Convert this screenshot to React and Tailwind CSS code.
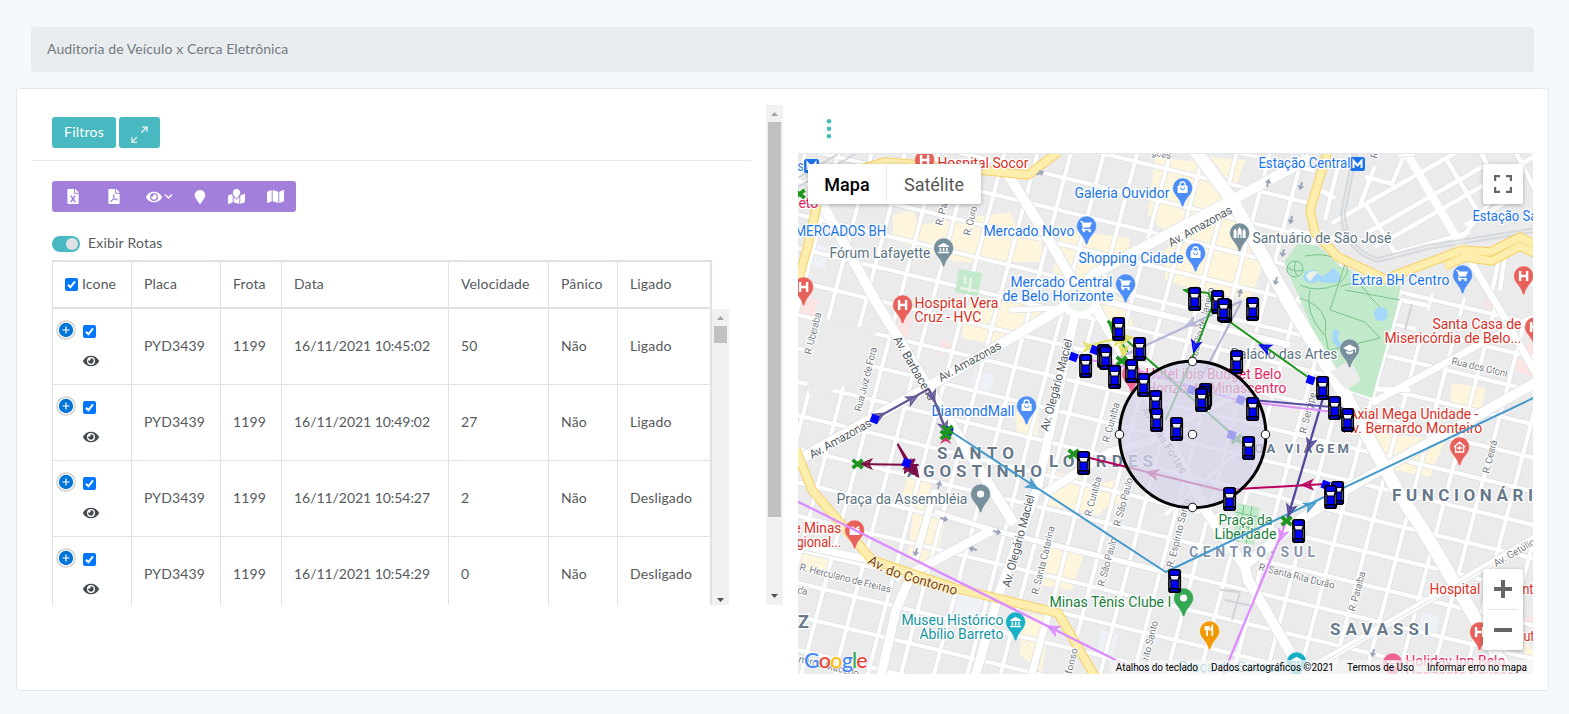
import React from "react";
import { FaEye, FaMap, FaMapMarked, FaMapMarker, FaFileExcel, FaFilePdf, FaChevronDown } from "react-icons/fa";

/* ---------- left panel ---------- */

const COLS = "grid grid-cols-[79px_89px_61px_167px_100px_69px_95px]";
const ROWS = [
  ["PYD3439", "1199", "16/11/2021 10:45:02", "50", "Não", "Ligado"],
  ["PYD3439", "1199", "16/11/2021 10:49:02", "27", "Não", "Ligado"],
  ["PYD3439", "1199", "16/11/2021 10:54:27", "2", "Não", "Desligado"],
  ["PYD3439", "1199", "16/11/2021 10:54:29", "0", "Não", "Desligado"],
];
const HEADS = ["Placa", "Frota", "Data", "Velocidade", "Pânico", "Ligado"];

function Check() {
  return (
    <svg width="13" height="13" viewBox="0 0 13 13" className="shrink-0">
      <rect width="13" height="13" rx="2" fill="#0075ff" />
      <path d="M3 6.8 5.4 9.2 10 3.4" fill="none" stroke="#fff" strokeWidth="2" />
    </svg>
  );
}

function Plus() {
  return (
    <svg width="20" height="20" viewBox="0 0 20 20" className="shrink-0">
      <circle cx="10" cy="10" r="9.2" fill="#fff" stroke="#c9c9c9" strokeWidth="1.2" />
      <circle cx="10" cy="10" r="7.2" fill="#0275d8" />
      <path d="M6.5 10h7M10 6.5v7" stroke="#fff" strokeWidth="1.2" />
    </svg>
  );
}

function Scrollbar({ thumb, tail }) {
  return (
    <div className="flex w-[17px] shrink-0 flex-col items-center bg-[#f1f1f1]">
      <div className="flex h-[17px] w-full shrink-0 items-center justify-center">
        <svg width="7" height="4" viewBox="0 0 7 4"><path d="M0 4 3.5 0 7 4z" fill="#a3a3a3" /></svg>
      </div>
      <div className={`w-[13px] shrink-0 bg-[#c1c1c1] ${thumb}`} />
      <div className={`mt-auto ${tail}`}>
        <svg className="block" width="7" height="4" viewBox="0 0 7 4"><path d="M0 0 3.5 4 7 0z" fill="#505050" /></svg>
      </div>
    </div>
  );
}

function LeftPanel() {
  return (
    <div className="flex h-[500px] w-[751px]">
      <div className="flex w-[734px] shrink-0 flex-col overflow-hidden">
        <div className="flex h-[56px] w-[719px] shrink-0 gap-[3px] border-b border-[#e3ebf3] pt-3 pl-5 text-white">
          <button className="h-[31px] w-16 rounded-[3px] bg-[#48b9c1] pb-[2px] text-[14px] tracking-[0.2px]">Filtros</button>
          <button className="flex h-[31px] w-[41px] items-center justify-center rounded-[3px] bg-[#48b9c1]">
            <svg width="17" height="17" viewBox="0 0 17 17" fill="none" stroke="#fff" strokeWidth="1.1" className="mt-[3px]">
              <path d="M11 1H16v5M16 1l-5.500 5.500M6 16.200H1v-5M1 16.200l5-5" />
            </svg>
          </button>
        </div>
        <div className="mt-5 ml-5 flex h-[31px] w-[244px] shrink-0 items-center rounded-[3px] bg-[#a27fdb] pl-[15px] text-white">
          <FaFileExcel className="w-3 text-[15px]" />
          <FaFilePdf className="ml-[29px] w-3 text-[15px]" />
          <FaEye className="ml-[26px] text-[16px]" />
          <FaChevronDown className="ml-[2px] text-[9px]" />
          <FaMapMarker className="ml-5 text-[14px]" />
          <FaMapMarked className="ml-[21px] text-[17px]" />
          <FaMap className="ml-[22px] text-[17px]" />
        </div>
        <div className="mt-[22px] ml-5 flex h-[20px] shrink-0 items-center gap-2">
          <div className="flex h-4 w-7 items-center justify-end rounded-full bg-[#48b9c1] pr-0.5">
            <div className="h-3 w-3 rounded-full bg-[#dee2e6]" />
          </div>
          <span className="pb-[3px] text-[14px] tracking-[0.2px]">Exibir Rotas</span>
        </div>
        <div className={`${COLS} mt-[6px] ml-5 h-[49px] w-[660px] shrink-0 border-y-2 border-[#dee2e6] text-[14px] tracking-[0.15px]`}>
          <div className="flex items-center gap-1 border-l border-[#dee2e6] pl-3"><Check /><span className="pb-[2px]">Icone</span></div>
          {HEADS.map((h, i) => (
            <div key={h} className={`flex items-center border-l border-[#dee2e6] pb-[2px] pl-3 ${i === 5 ? "border-r-2" : ""}`}>{h}</div>
          ))}
        </div>
        <div className="ml-5 flex h-[296px] shrink-0">
          <div className="h-full w-[660px] overflow-hidden">
            {ROWS.map((r, n) => (
              <div key={n} className={`${COLS} h-[76px] text-[14px]`}>
                <div className="flex gap-[7px] border-b border-l border-[#dee2e6] pt-[11px] pl-[3px]">
                  <Plus />
                  <div className="flex flex-col gap-[15px] pt-[5px]">
                    <Check />
                    <FaEye className="text-[16px] text-[#434a50]" />
                  </div>
                </div>
                {r.map((c, i) => (
                  <div key={i} className={`flex items-center border-b border-l border-[#dee2e6] pb-[2px] pl-3 ${i === 5 ? "border-r-2" : ""} ${i === 2 ? "tracking-[-0.05px]" : "tracking-[0.15px]"}`}>{c}</div>
                ))}
              </div>
            ))}
          </div>
          <Scrollbar thumb="h-[17px]" tail="pb-[3px]" />
        </div>
      </div>
      <Scrollbar thumb="h-[395px]" tail="pb-[7px]" />
    </div>
  );
}

/* ---------- map ---------- */

const BLUE = "#1a73e8", RED = "#d93025", SLATE = "#5b7382", GREEN = "#188038", PINK = "#e91e63", TEAL = "#1295a4", AREA = "#66788a";

// [text, x, baseline, width, colour]
const LABELS = [
  ["s", 797, 171, 6, BLUE], ["Hospital Socor", 937, 168, 91, RED], ["Galeria Ouvidor", 1074, 198, 95, BLUE],
  ["Estação Central", 1258, 168, 92, BLUE], ["Estação Sa", 1472, 221, 65, BLUE], ["MERCADOS BH", 794, 236, 92, BLUE],
  ["eto", 798, 208, 20, PINK], ["Fórum Lafayette", 829, 258, 101, SLATE], ["Mercado Novo", 983, 236, 91, BLUE],
  ["Santuário de São José", 1252, 243, 139, SLATE], ["Shopping Cidade", 1078, 263, 105, BLUE],
  ["Mercado Central", 1010, 287, 102, BLUE], ["de Belo Horizonte", 1002, 301, 111, BLUE],
  ["Extra BH Centro", 1351, 285, 98, BLUE], ["Santa Casa de", 1432, 329, 89, RED],
  ["Misericórdia de Belo...", 1384, 343, 137, RED], ["Hospital Vera", 914, 308, 84, RED], ["Cruz - HVC", 914, 322, 67, RED],
  ["Palácio das Artes", 1230, 359, 107, SLATE], ["Hotel ibis Budget Belo", 1145, 379, 136, PINK],
  ["Horizonte Minascentro", 1146, 393, 140, PINK], ["DiamondMall", 931, 416, 83, BLUE],
  ["Axial Mega Unidade -", 1348, 419, 130, RED], ["Av. Bernardo Monteiro", 1343, 433, 139, RED],
  ["Praça da Assembléia", 836, 504, 131, SLATE], ["e Minas", 793, 533, 48, RED], ["gional...", 796, 547, 45, RED],
  ["Museu Histórico", 901, 625, 102, TEAL], ["Abílio Barreto", 919, 639, 84, TEAL], ["Minas Tênis Clube I", 1049, 607, 122, GREEN],
  ["Praça da", 1218, 525, 54, GREEN], ["Liberdade", 1214, 539, 62, GREEN], ["Hospital", 1429, 594, 51, RED],
  ["nt", 1522, 594, 11, RED], ["ut", 1523, 641, 11, RED], ["Holiday Inn Belo", 1405, 666, 100, PINK],
  ["Horizonte Savassi", 1405, 680, 112, PINK], ["Praça da Savassi", 1178, 672, 107, TEAL],
];
const AREAS = [
  ["SANTO", 937, 459, 77, 17], ["AGOSTINHO", 907, 477, 135, 17], ["LOURDES", 1049, 467, 104, 17], ["BOA VIAGEM", 1243, 453, 106, 13],
  ["FUNCIONÁRI", 1392, 501, 141, 17], ["CENTRO-SUL", 1189, 557, 126, 14], ["SAVASSI", 1330, 635, 99, 17], ["Z", 798, 628, 12, 18],
];
// [text, x, y, angle, length, size]
const STREETS = [
  ["Av. Amazonas", 1171, 247, -29, 71, 12], ["Av. Amazonas", 941, 382, -29, 70, 12], ["Av. Amazonas", 812, 459, -29, 69, 12],
  ["Av. Barbacena", 893, 339, 60, 72, 12], ["Av. Olegário Maciel", 1048, 432, -75, 95, 12], ["Av. Olegário Maciel", 1010, 588, -75, 95, 12],
  ["R. Uberaba", 811, 355, -76, 43, 10], ["Rua Juiz de Fora", 861, 412, -76, 66, 10], ["R. Curitiba", 1109, 443, -75, 41, 10],
  ["R. Curitiba", 1091, 517, -75, 41, 10], ["R. São Paulo", 1120, 527, -75, 50, 10], ["R. São Paulo", 1104, 587, -75, 50, 10],
  ["R. Santa Catarina", 1038, 595, -76, 70, 10], ["Av. Bias Fortes", 1141, 410, 58, 76, 11], ["Rua Rio de Janeiro", 1196, 362, -76, 76, 10],
  ["R. Pará", 942, 226, -76, 32, 10], ["R. Ouro", 970, 236, -76, 30, 10], ["R. Espírito Santo", 1173, 568, -76, 71, 10],
  ["Espírito Santo", 1144, 678, -76, 58, 10], ["R. Herculano de Freitas", 799, 570, 14, 94, 10], ["R. Santa Rita Durão", 1258, 570, 14, 78, 10],
  ["R. Paraíba", 1355, 612, -75, 41, 10], ["R. Ceará", 1489, 474, -76, 34, 10], ["R. Sergipe", 1306, 434, -76, 42, 10],
  ["Rua dos Otoni", 1451, 364, 13, 57, 10], ["Av. Getúlio Va", 1496, 567, -30, 60, 10], ["Afonso", 1070, 681, -76, 33, 10],
  ["mirco Macedo", 798, 662, 14, 62, 10], ["goas", 1151, 155, 12, 20, 10], ["R", 1377, 159, -76, 7, 10], ["da", 797, 593, 12, 10, 10],
];

const PIN_BLUE = "#4c8df6", PIN_RED = "#e8625b", PIN_SLATE = "#78909c";
// [x, y, colour, glyph]
const PINS = [
  [924, 160, PIN_RED, "H"], [803, 287, PIN_RED, "H"], [902, 305, PIN_RED, "H"], [1523, 276, PIN_RED, "H"], [1534, 327, PIN_RED, "H"],
  [1479, 632, PIN_RED, "H"], [1182, 188, PIN_BLUE, "bag"], [1195, 253, PIN_BLUE, "bag"], [1026, 406, PIN_BLUE, "bag"],
  [1086, 226, PIN_BLUE, "cart"], [1125, 284, PIN_BLUE, "cart"], [1462, 275, PIN_BLUE, "cart"], [943, 248, PIN_SLATE, "bank"],
  [1239, 233, PIN_SLATE, "castle"], [1349, 349, PIN_SLATE, "cap"], [980, 494, PIN_SLATE, "dot"], [854, 530, PIN_RED, "church"],
  [1015, 622, "#18b0c4", "bank"], [1183, 598, "#34a853", "dot"], [1209, 631, "#f29900", "fork"], [1296, 662, "#18b0c4", "bank"],
  [1392, 663, "#f06292", "bed"], [1459, 447, PIN_RED, "house"], [1131, 374, "#f06292", "bed"],
];

function Glyph({ k }) {
  const s = { fill: "none", stroke: "#fff", strokeWidth: 1.7 };
  if (k === "H") return <path {...s} strokeWidth="2.4" d="M-3.500-5V5M3.500-5V5M-3.500 0H3.500" />;
  if (k === "bag") return <g><rect x="-5" y="-2.500" width="10" height="7.500" rx="1" fill="#fff" /><path {...s} strokeWidth="1.3" d="M-2.500-2v-1.500a2.500 2.500 0 0 1 5 0V-2" /><path d="M-2.200-.5a2.200 2.200 0 0 0 4.400 0" fill="none" stroke={PIN_BLUE} /></g>;
  if (k === "cart") return <g fill="#fff"><path d="M-6.500-5h2.300l.8 1.500H5.500L3.200 1.500H-2.500L-3.300 3H4v1.200h-9l1.200-3L-5.200-4h-1.300z" /><circle cx="-2.700" cy="5" r="1.200" /><circle cx="3" cy="5" r="1.200" /></g>;
  if (k === "bank") return <g fill="#fff"><path d="M-5.500-2 0-5.200 5.500-2v1h-11zM-5.500 3.800h11V5.200h-11z" /><path d="M-4-.2h1.500v3.500H-4zM-.8-.2H.8v3.500H-.8zM2.500-.2H4v3.500H2.500z" /></g>;
  if (k === "castle") return <path fill="#fff" d="M-6 5v-7l1.500-2.500L-3-2v7zM-2 5v-8l2-3 2 3v8H.8V1.500H-.8V5zM3 5v-7l1.500-2.500L6-2v7z" />;
  if (k === "cap") return <path fill="#fff" d="M-6.500-1 0-4.500 6.500-1v4.500h-1V0L0 2.500zM-3.500 1.800 0 3.600 3.500 1.800V4L0 5.600-3.500 4z" />;
  if (k === "dot") return <circle r="3.600" fill="#fff" />;
  if (k === "church") return <path fill="#fff" d="M-5 5v-7h2l1-2 2 2V-1L4-4l1 1-2 2h2v6z" />;
  if (k === "fork") return <path {...s} d="M-2.500-5v10M-4.200-5v3.500h3.400V-5M2.700 5v-10q-1.500 2-1.200 5" />;
  if (k === "house") return <path {...s} strokeWidth="1.300" d="M-5.500 0 0-4.800 5.500 0M-4-1v6h8v-6M0-1.500V3.500M-2.500 1h5" />;
  return <path fill="#fff" d="M-5-3h1.500V1H5v3.500H4V3h-7.500v1.500H-5zM-2-2h5q1.500 0 1.500 2h-6.500z" />;
}

const Pin = ({ p: [x, y, c, k] }) => (
  <g transform={`translate(${x + 0.6} ${y})`}>
    <path d="M-9.900 0a9.900 9.900 0 0 1 19.800 0c0 7-7.200 9.500-9 18.500h-1.800C-2.700 9.500-9.900 7-9.900 0z" fill={c} stroke="#fff" strokeOpacity=".5" strokeWidth=".7" />
    <Glyph k={k} />
  </g>
);

const CARS = [
  [1194, 299], [1217, 302], [1225, 311], [1223, 310], [1252, 309], [1118, 329], [1103, 356], [1105, 358], [1139, 349], [1085, 366], [1114, 377],
  [1131, 371], [1143, 385], [1155, 402], [1156, 420], [1176, 429], [1236, 362], [1205, 395], [1204, 398], [1201, 400], [1252, 409],
  [1248, 448], [1083, 463], [1229, 499], [1322, 388], [1334, 408], [1347, 420], [1337, 493], [1330, 497], [1298, 531], [1174, 581],
];
const Car = ({ p: [x, y] }) => (
  <g transform={`translate(${x + 0.6} ${y})`}>
    <rect x="-6.500" y="-12" width="13" height="24" rx="2.800" fill="#000" />
    <rect x="-4.500" y="-10.500" width="9" height="4.800" rx="1" fill="#0000f0" />
    <path d="M-4-5h8l-1 3.500h-6z" fill="#eef" />
    <path d="M-3.300-.5h6.600v7.500h-6.600z" fill="#0000ff" />
    <path d="M-4 9.400h8" stroke="#0000d8" strokeWidth="1.800" />
    <path d="M-4.700-2v9M4.700-2v9" stroke="#7a7aa5" strokeWidth=".8" />
  </g>
);

// minor street grid
const CROSS = Array.from({ length: 22 }, (_, i) => -20 + i * 33.5);
const DOWN = Array.from({ length: 28 }, (_, i) => 806 + i * 33.2);

const AVENUES = [
  ["M798 460 928 387 1062 308 1095 273 1232 200 1310 158", 10], ["M808 178 875 300 928 387 1014 524", 10], ["M1078 300 1037 490 1000 590 974 680", 9],
  ["M1005 170 1045 233 1078 290 1095 307 1150 400 1205 510 1245 567 1248 580 1303 674", 10], ["M1195 150 1232 200 1290 305 1345 395 1398 492 1425 533 1478 623 1512 680", 13],
  ["M1535 383 1345 490 1300 520 1245 565", 10], ["M1372 403 1482 343 1533 318", 7], ["M1535 538 1325 660 1300 676", 7], ["M1045 493 1110 452 1190 430", 8],
  ["M992 530 912 573 896 610 880 680", 9], ["M935 490 915 560", 7], ["M1462 247 1500 310 1535 372", 7], ["M798 545 880 562 900 580", 7],
  ["M1062 308 1010 310", 5], ["M1410 390 1345 388 1372 398 1400 300", 5], ["M1100 300 1290 345", 6], ["M1163 430 1260 385", 6], ["M1415 154 1398 156", 3],
  ["M935 512 992 530 1165 572", 5], ["M1052 600 1030 680", 7], ["M1165 515 1240 450", 4],
];
const BLOCKS = [
  "M893 215 912 210 920 225 1010 212 1022 240 1045 230 1040 262 958 262 945 258 893 240z", "M1050 290 1062 230 1130 238 1128 252 1100 265 1090 275z",
  "M1155 157 1200 162 1225 200 1165 232 1148 215z", "M1210 157 1245 160 1235 190z", "M1178 238 1235 210 1265 260 1250 300 1195 290 1165 280 1165 250z",
  "M1095 290 1125 300 1135 330 1110 335z", "M1048 470 1085 480 1108 500 1100 515 1048 505z", "M965 310 975 300 1042 305 1040 322 1000 345 962 338z",
  "M1015 418 1020 400 1040 405 1037 440 1018 436z", "M908 475 932 480 928 500 902 495z", "M1452 383 1486 388 1480 413 1450 408z", "M1373 433 1445 440 1430 477 1395 470z",
  "M914 500 945 520 935 570 908 560z", "M1045 540 1085 550 1072 590 1040 585z", "M1022 612 1050 618 1042 672 1020 655z", "M1075 490 1115 480 1125 500 1090 515z",
  "M800 545 830 552 828 575 798 568z", "M1525 640 1533 650 1533 674 1522 674z",
];
const PINKS = ["M900 315 912 318 906 340 895 330z", "M941 340 957 345 953 356 938 352z", "M798 295 818 300 813 318 798 314z", "M1483 300 1492 300 1490 315z", "M1520 355 1533 335 1533 378 1514 370z", "M1525 620 1533 612 1533 632z"];
const YELLOW = [
  "M817 205 808 245 797 285", "M796 450 812 490 872 560 955 588 1058 613 1097 680", "M850 172 885 162 980 170 1028 175 1058 152",
  "M1328 150 1310 210 1315 233 1338 257 1385 279 1462 250 1490 252 1520 237 1536 245", "M1445 266 1465 257 1492 261 1520 246 1536 254",
];
const NORTHEAST = "M1315 150H1540V330L1485 300 1400 290 1385 279 1338 257 1312 225z";
const NE_ROADS = "M1332 223 1455 153M1375 247 1535 156M1365 234 1482 167M1445 157 1477 210M1365 203 1395 253 1470 232M1365 177 1392 184 1405 153M1375 166 1360 205M1340 158 1325 220M1320 190 1335 198M1340 240 1290 230M1480 150 1500 190 1480 215 1460 240M1510 200 1465 225M1400 300 1430 306M1500 255 1490 300M1505 255 1500 290M1520 280 1535 285M1515 150 1535 190";

const Head = ({ x, y, a, c, o = 1 }) => (
  <path d="M0 0-11-4.800-8 0-11 4.800z" transform={`translate(${x} ${y}) rotate(${a})`} fill={c} fillOpacity=".8" stroke={c} strokeWidth="1.200" opacity={o} />
);
const Cross = ({ x, y }) => <path d="M-5-4 5 4M-5 4 5-4" transform={`translate(${x} ${y})`} stroke="#1e961e" strokeWidth="3.600" />;
const Diamond = ({ x, y, o = 1 }) => <rect x="-4" y="-4" width="8" height="8" transform={`translate(${x} ${y}) rotate(20)`} fill="#0000ff" opacity={o} />;

function CityMap() {
  return (
    <svg className="block h-[520px] w-[735px]" viewBox="798 154 735 520" fontFamily="Roboto, sans-serif">
      <rect x="798" y="154" width="735" height="520" fill="#ebebec" />
      {BLOCKS.map((d) => <path key={d} d={d} fill="#fdf6dd" />)}
      {PINKS.map((d) => <path key={d} d={d} fill="#fce4e3" />)}
      <g fill="#eef2f6"><path d="M803 240 830 248 825 270 800 262z" /><path d="M975 370 995 375 990 392 970 388zM950 585 985 590 978 620 948 612zM1100 630 1118 635 1112 660 1098 655zM1422 612 1440 616 1436 634 1420 630z" /></g>
      <g fill="none" stroke="#dcdee2" strokeWidth="5.400">
        {CROSS.map((y) => <path key={y} d={`M798 ${y}L1540 ${y + 178}`} />)}
        {DOWN.map((x) => <path key={x} d={`M${x} 150L${x - 139} 680`} />)}
      </g>
      <g fill="none" stroke="#fff" strokeWidth="4">
        {CROSS.map((y) => <path key={y} d={`M798 ${y}L1540 ${y + 178}`} />)}
        {DOWN.map((x) => <path key={x} d={`M${x} 150L${x - 139} 680`} />)}
      </g>
      {/* large blocks without inner streets */}
      <path d="M822 318 876 331 862 398 841 385 812 405 806 380z" fill="#ebebec" />
      <path d="M1425 310 1470 318 1450 345 1410 342z" fill="#ebebec" />
      {/* small squares */}
      <path d="M959 269 982 273 978 296 955 292z" fill="#c3e9cb" />
      <path d="M965 276v8M971 278l-2 14M960 288l18 3" stroke="#ebf3ec" strokeWidth="2.500" fill="none" />
      <path d="M1238 503 1260 508 1254 545 1232 540z" fill="#c3e9cb" />
      <path d={NORTHEAST} fill="#ebebec" />
      <path d={NE_ROADS} fill="none" stroke="#dcdee2" strokeWidth="5.800" />
      <path d={NE_ROADS} fill="none" stroke="#fff" strokeWidth="4.400" />
      <path d="M1405 150 1462 247" fill="none" stroke="#fff" strokeWidth="8" />
      {AVENUES.map(([d, w]) => <path key={d} d={d} fill="none" stroke="#dde0e3" strokeWidth={w + 1.600} strokeLinejoin="round" />)}
      {AVENUES.map(([d, w]) => <path key={d} d={d} fill="none" stroke="#fff" strokeWidth={w} strokeLinejoin="round" />)}
      <path d="M1535 539 1325 661" stroke="#dfe1e4" strokeWidth="1" />
      <circle cx="1080" cy="298" r="17" fill="#ebf3ec" stroke="#fff" strokeWidth="7" />
      <path d="M1284 262 1298 243 1318 246 1340 266 1380 283 1401 285 1397 308 1372 398 1350 391 1313 330z" fill="#c3e9cb" />
      <path d="M1330 372 1350 360 1361 380 1346 390z" fill="#ebebec" />
      <g fill="#a4d8fb">
        <path d="M1303 277c3-9 12-8 15-4 4 7 10 0 15-5 6 3 9 9 7 13-8 4-17 2-22 0-7 4-13 2-15-4z" />
        <circle cx="1381" cy="314" r="7" /><path d="M1333 329 1339 331 1338 340 1345 348 1340 350 1332 341z" />
      </g>
      <path d="M1306 276c4-7 8-5 12-4l-5 6-3 4z" fill="#e9f0e6" />
      <g fill="none" stroke="#79c48b" strokeWidth="1">
        <circle cx="1295" cy="269" r="8" /><path d="M1287 267q8 6 16 3M1296 261q-4 8 2 16M1305 256q25-5 40 8 8 10-9 21-20 8-36 0M1345 264 1330 310 1365 322 1380 338 1330 350M1345 290 1400 300M1300 298q30 10 25 35l5 25M1340 287q20-10 30 10l10 10M1310 290q-6 22 14 45" />
        <path d="M1235 512 1262 518M1233 524 1260 530M1244 505 1238 542M1252 506 1246 544" />
      </g>
      <g fill="none" stroke="#d0d4d8">
        <path d="M1355 153 1343 213Q1344 250 1378 260L1428 247 1535 230" strokeWidth="6" strokeOpacity=".7" />
        <path d="M1355 153 1343 213Q1344 250 1378 260L1428 247 1535 230" stroke="#f1f2f3" strokeWidth="1" />
        <path d="M798 187 845 160 858 152M798 178 838 154" strokeWidth="2" />
        <path d="M1405 330 1412 304M1220 590 1240 592 1232 620M1225 600 1252 606" strokeWidth="2" />
      </g>
      {YELLOW.map((d) => <path key={d} d={d} fill="none" stroke="#f6cf65" strokeWidth="9.500" strokeLinejoin="round" />)}
      {YELLOW.map((d) => <path key={d} d={d} fill="none" stroke="#feeead" strokeWidth="7.500" strokeLinejoin="round" />)}
      <g fill="#9aa5b8">
        {[[944, 519, 14], [997, 532, 14], [973, 549, 194], [916, 552, 104], [939, 485, 284], [1268, 183, 284], [1291, 220, 104], [1283, 253, 104], [1276, 281, 104], [1240, 293, 284], [1301, 186, 104], [1373, 653, 104], [1040, 173, -24]].map(([x, y, a]) => (
          <path key={`${x}-${y}`} d="M-4-1H0v-2.500L4.500 0 0 3.500V1h-4z" transform={`translate(${x} ${y}) rotate(${a})`} />
        ))}
      </g>

      <g fill="#646b73" stroke="#fff" strokeWidth="2.200" paintOrder="stroke" strokeLinejoin="round">
        {STREETS.map(([t, x, y, a, w, s], i) => (
          <text key={i} transform={`translate(${x} ${y}) rotate(${a})`} fontSize={s} textLength={w} fill={s > 11 ? "#535a61" : "#747a82"}>{t}</text>
        ))}
        <path id="contorno" d="M867 563 888 575 958 596" fill="none" stroke="none" />
        <text fontSize="13.500" fill="#7a4510" stroke="#fff6d8"><textPath href="#contorno" textLength="95">Av. do Contorno</textPath></text>
      </g>
      <g fontWeight="700" fill={AREA} stroke="#fff" strokeWidth="2.500" paintOrder="stroke">
        {AREAS.map(([t, x, y, w, s]) => <text key={t} x={x} y={y} fontSize={s} textLength={w} fill={t === "CENTRO-SUL" ? "#8494ab" : AREA}>{t}</text>)}
      </g>
      {PINS.map((p, i) => <Pin key={i} p={p} />)}
      {[[804, 159], [1350, 157]].map(([x, y]) => (
        <g key={x} transform={`translate(${x} ${y})`}>
          <rect width="15" height="14" rx="2.500" fill="#1a73e8" />
          <path d="M3.500 11V4l4 4.500 4-4.500v7" fill="none" stroke="#fff" strokeWidth="2" />
        </g>
      ))}
      <g stroke="#fff" strokeWidth="2.500" paintOrder="stroke" strokeLinejoin="round" fontSize="13.800">
        {LABELS.map(([t, x, y, w, c], i) => <text key={i} x={x + 0.4} y={y} textLength={w} lengthAdjust="spacingAndGlyphs" fill={c}>{t}</text>)}
      </g>

      {/* routes */}
      <g transform="translate(0.6 0)">
        <g fill="none" strokeWidth="2" strokeLinejoin="round">
          <path d="M951 432 1165 572 1535 397" stroke="#4499cc" />
          <path d="M796 501 1115 660" stroke="#dc8cff" strokeWidth="2.300" /><path d="M1115 660 1160 676" stroke="#e9b8fb" />
          <path d="M1286 521 1222 676" stroke="#dc8cff" strokeWidth="2.300" />
          <path d="M1323 396 1287 518" stroke="#51479b" strokeWidth="2.300" />
          <path d="M874 419 928 389 932 396 946 432" stroke="#655a96" strokeWidth="2.400" />
          <path d="M918 465 857 464M897 444 910 470M897 444 916 474M903 462 914 474" stroke="#7a0c46" strokeWidth="2" />
          <path d="M1325 484 1220 490 1073 454" stroke="#b8005c" />
          <path d="M1241 301 1120 357M1241 301 1202 375" stroke="#b4b4d6" strokeWidth="2.200" />
          <path d="M1075 357 1125 367 1240 401 1342 413" stroke="#de91fb" />
          <path d="M1240 399 1342 408" stroke="#5a4da6" />
          <path d="M1183 290 1208 293 1212 305 1190 362 1165 420M1228 321 1310 379M1107 321 1127 352M1120 335 1238 440" stroke="#1f961f" />
          <path d="M1085 347 1105 341 1130 338M1120 337 1122 356" stroke="#e3df62" />
        </g>
        <Head x={917} y={396} a={-29} c="#655a96" /><Head x={884} y={413} a={-29} c="#655a96" /><Head x={934} y={402} a={70} c="#655a96" /><Head x={946} y={433} a={70} c="#655a96" />
        <Head x={1037} y={489} a={33} c="#4499cc" /><Head x={1315} y={503} a={-25} c="#4499cc" />
        <Head x={1047} y={626} a={207} c="#dc8cff" /><Head x={1279} y={541} a={110} c="#dc8cff" />
        <Head x={1308} y={450} a={105} c="#51479b" /><Head x={1288} y={516} a={105} c="#51479b" />
        <Head x={1301} y={485} a={178} c="#b8005c" /><Head x={1146} y={472} a={194} c="#b8005c" />
        <Head x={860} y={464} a={180} c="#7a0c46" /><Head x={918} y={477} a={55} c="#7a0c46" /><Head x={903} y={469} a={150} c="#7a0c46" /><Head x={914} y={460} a={-40} c="#7a0c46" /><Head x={902} y={464} a={180} c="#7a0c46" />
        <Head x={916} y={470} a={30} c="#7a0c46" /><Head x={904} y={473} a={120} c="#7a0c46" />
        <Head x={1185} y={326} a={155} c="#b4b4d6" /><Head x={1094} y={347} a={0} c="#e3df62" /><Head x={1124} y={339} a={-10} c="#e3df62" /><Head x={1123} y={357} a={90} c="#e3df62" /><Head x={1132} y={337} a={-10} c="#e3df62" />
        <Head x={1183} y={290} a={190} c="#1f961f" /><Head x={1108} y={321} a={230} c="#1f961f" />
        <Head x={1193} y={352} a={105} c="#0000ff" /><Head x={1259} y={345} a={205} c="#0000ff" />
        <path d="m945 436-6 8 6-3 6 3z" fill="#d5347a" />
        <Cross x={1073} y={454} /><Cross x={857} y={464} /><Diamond x={948} y={431} /><Cross x={947} y={430} /><Cross x={945} y={435} /><Cross x={1286} y={521} /><Cross x={1121} y={361} /><Cross x={1236} y={439} /><Cross x={799} y={194} />
        <Diamond x={874} y={419} /><Diamond x={906} y={463} /><Diamond x={1073} y={357} /><Diamond x={1094} y={350} /><Diamond x={1310} y={380} /><Diamond x={1325} y={485} /><Diamond x={1240} y={400} /><Diamond x={1231} y={435} /><Diamond x={1191} y={390} />
      </g>
      <circle cx="1192.700" cy="434.500" r="73.200" fill="#d6d3e9" fillOpacity=".75" stroke="#000" strokeWidth="3" />
      {CARS.map((p, i) => <Car key={i} p={p} />)}
      {[[1192.5, 361.5], [1192.5, 507.5], [1119.500, 434.500], [1265.500, 434.500], [1192.5, 434.5]].map(([x, y]) => (
        <circle key={`${x}${y}`} cx={x} cy={y} r="4.200" fill="#fff" stroke="#222" strokeWidth="1.100" />
      ))}
    </svg>
  );
}

function MapPanel() {
  return (
    <div className="ml-[15px] flex w-[735px] flex-col">
      <div className="flex h-[49px] border-b border-[#e3e8f1] pt-[13px] pl-[28px]">
        <svg width="6" height="22" viewBox="0 0 6 22" fill="#48b9c1"><circle cx="3" cy="3.300" r="2.300" /><circle cx="3" cy="10.800" r="2.300" /><circle cx="3" cy="18.300" r="2.300" /></svg>
      </div>
      <div className="relative h-[520px] overflow-hidden">
        <CityMap />
        <div className="absolute top-[10px] left-[10px] flex h-10 rounded-[2px] bg-white font-[Roboto] text-[18px] shadow-[0_1px_4px_rgba(0,0,0,0.3)]">
          <div className="flex w-[79px] items-center justify-center border-r border-[#eee] font-medium text-black">Mapa</div>
          <div className="flex w-[94px] items-center justify-center text-[#565656]">Satélite</div>
        </div>
        <div className="absolute top-[10px] right-[10px] flex h-10 w-10 items-center justify-center rounded-[2px] bg-white shadow-[0_1px_4px_rgba(0,0,0,0.3)]">
          <svg width="18" height="18" viewBox="0 0 18 18" fill="none" stroke="#666" strokeWidth="2.200"><path d="M1.100 6V1.100H6M12 1.100h4.900V6M16.900 12v4.900H12M6 16.900H1.100V12" /></svg>
        </div>
        <div className="absolute right-[10px] bottom-[24px] flex h-[81px] w-10 flex-col items-center rounded-[2px] bg-white shadow-[0_1px_4px_rgba(0,0,0,0.3)]">
          <div className="flex h-[41px] w-[30px] items-center justify-center border-b border-[#e6e6e6]">
            <svg width="18" height="18" viewBox="0 0 18 18"><path d="M9 0v18M0 9h18" stroke="#666" strokeWidth="4" /></svg>
          </div>
          <div className="flex h-10 items-center"><svg width="18" height="4"><rect width="18" height="4" fill="#666" /></svg></div>
        </div>
        <div className="absolute bottom-0 left-[6px] flex font-[Lato] text-[21.5px] leading-[28px] font-medium tracking-[-0.85px] [text-shadow:0_0_2px_#fff,0_0_2px_#fff]">
          <span className="text-[#4285f4]">G</span><span className="text-[#ea4335]">o</span><span className="text-[#fbbc04]">o</span><span className="text-[#4285f4]">g</span><span className="text-[#34a853]">l</span><span className="text-[#ea4335]">e</span>
        </div>
        <div className="absolute right-0 bottom-0 flex h-[14px] items-center gap-[13px] bg-[#f5f5f5]/75 pr-[6px] pl-[6px] font-[Roboto] text-[10px] whitespace-nowrap text-black">
          <span className="tracking-[-0.06px]">Atalhos do teclado</span><span>Dados cartográficos ©2021</span><span>Termos de Uso</span><span>Informar erro no mapa</span>
        </div>
      </div>
    </div>
  );
}

export default function App() {
  return (
    <div className="h-[714px] w-[1569px] overflow-hidden bg-[#f5f9fc] pt-[27px] font-[Lato] text-[#55595d]">
      <div className="ml-[31px] flex h-[45px] w-[1503px] items-center rounded-[4px] bg-[#e9ecef] pb-[2px] pl-4 text-[14px] tracking-[0.1px] text-[#717a82]">Auditoria de Veículo x Cerca Eletrônica</div>
      <div className="mt-4 ml-4 flex h-[603px] w-[1533px] rounded-[3px] border border-[#e3e8f1] bg-white pt-4 pl-[15px]">
        <LeftPanel />
        <MapPanel />
      </div>
    </div>
  );
}
